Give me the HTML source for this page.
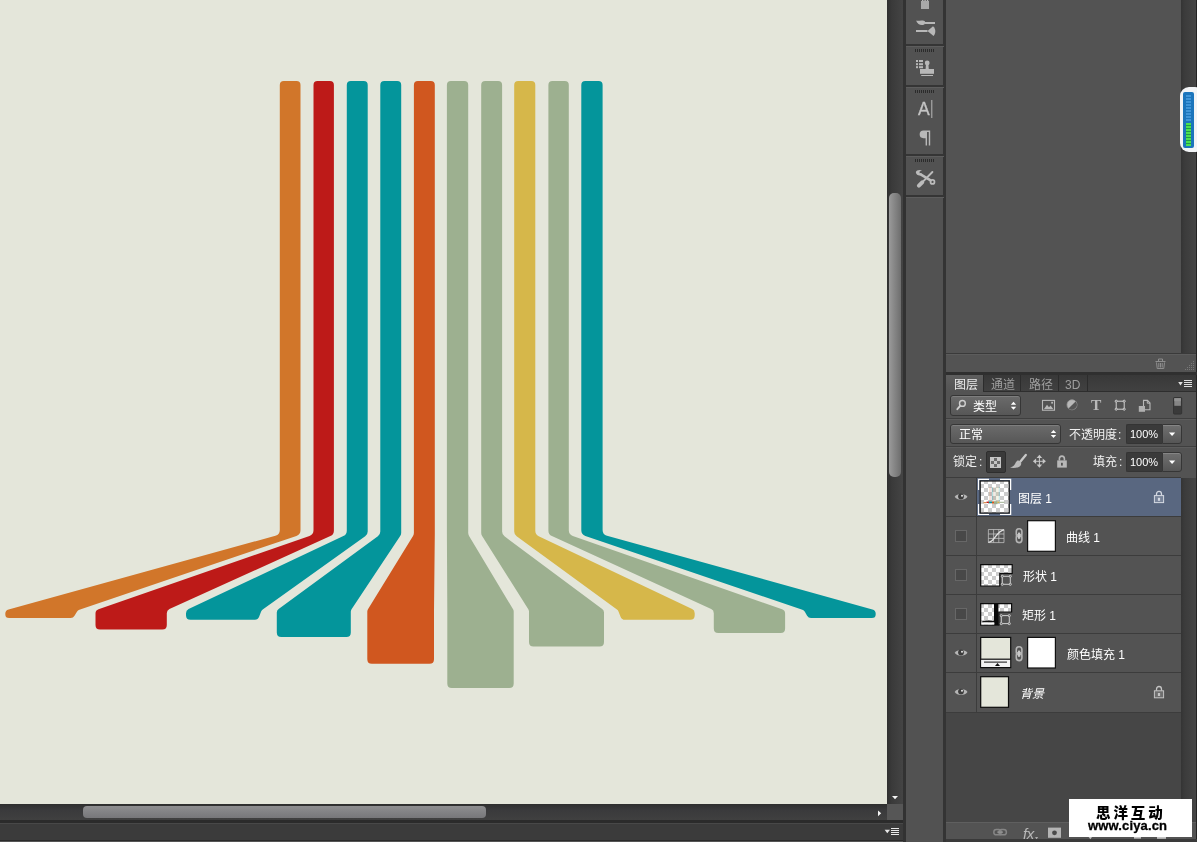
<!DOCTYPE html>
<html lang="zh-CN">
<head>
<meta charset="utf-8">
<title>Photoshop</title>
<style>
*{box-sizing:border-box;margin:0;padding:0}
html,body{width:1197px;height:842px;overflow:hidden;background:#535353}
body{position:relative;font-family:"Liberation Sans","Noto Sans CJK SC",sans-serif;font-size:12px;color:#f0f0f0}
.abs{position:absolute}
#canvas{left:0;top:0;width:887px;height:804px;background:#e4e6da}
#vscroll{left:887px;top:0;width:16px;height:804px;background:linear-gradient(90deg,#2f2f2f 0,#3a3a3a 30%,#444 100%)}
#vthumb{left:889px;top:193px;width:12px;height:284px;border-radius:5px;background:linear-gradient(90deg,#9a9a9a,#6e6e6e)}
#hscroll{left:0;top:804px;width:887px;height:16px;background:linear-gradient(180deg,#2e2e2e 0,#3a3a3c 40%,#404040 100%)}
#hthumb{left:83px;top:806px;width:403px;height:12px;border-radius:4px;background:linear-gradient(180deg,#8e8e90,#77777a)}
#corner{left:887px;top:804px;width:16px;height:16px;background:#565656}
#status{left:0;top:820px;width:903px;height:22px;background:#3b3b3b;border-top:3px solid #2b2b2b;border-bottom:1px solid #555;box-shadow:inset 0 1px 0 #484848,inset 0 -1px 0 #2a2a2a}
#iconcol{left:903px;top:0;width:43px;height:842px;background:#525252;border-left:3px solid #323232;border-right:3px solid #343434}
.sep{position:absolute;left:906px;width:38px;height:2px;background:#353535;border-bottom:1px solid #5d5d5d;height:3px}
.grip{position:absolute;left:915px;width:19px;height:3px;background:repeating-linear-gradient(90deg,#2b2b2b 0,#2b2b2b 1px,transparent 1px,transparent 2px)}
#rpanel{left:946px;top:0;width:235px;height:353px;background:#535353}
#rstrip{left:1181px;top:0;width:16px;height:842px;background:linear-gradient(90deg,#343434 0,#3b3b3b 20%,#454545 92%,#242424 94%,#222 100%)}
</style>
</head>
<body>
<div id="canvas" class="abs">
<svg width="887" height="804" viewBox="0 0 887 804" style="position:absolute;left:0;top:0">
<path fill="#d1762a" d="M279.80 85.00 Q279.80 81.00 283.80 81.00 L296.50 81.00 Q300.50 81.00 300.50 85.00 L300.50 530.20 Q300.50 534.50 296.43 535.88 L79.37 609.77 Q77.80 610.30 76.95 611.72 L74.51 615.81 Q73.20 618.00 70.65 618.00 L9.15 618.00 Q5.30 618.00 5.30 614.15 L5.30 613.73 Q5.30 610.30 8.60 609.39 L275.40 535.72 Q279.80 534.50 279.80 529.93Z"/>
<path fill="#bd1a18" d="M313.50 85.00 Q313.50 81.00 317.50 81.00 L329.90 81.00 Q333.90 81.00 333.90 85.00 L333.90 530.63 Q333.90 534.50 330.38 536.10 L169.44 609.10 Q166.80 610.30 166.80 613.20 L166.80 625.00 Q166.80 629.50 162.30 629.50 L100.00 629.50 Q95.50 629.50 95.50 625.00 L95.50 613.50 Q95.50 610.30 98.52 609.25 L309.47 535.90 Q313.50 534.50 313.50 530.23Z"/>
<path fill="#04959b" d="M346.80 85.00 Q346.80 81.00 350.80 81.00 L363.70 81.00 Q367.70 81.00 367.70 85.00 L367.70 531.41 Q367.70 534.50 365.19 536.29 L262.70 609.51 Q261.60 610.30 261.12 611.56 L259.11 616.81 Q258.00 619.70 254.90 619.70 L190.50 619.70 Q186.00 619.70 186.00 615.20 L186.00 613.15 Q186.00 610.30 188.58 609.08 L343.36 536.12 Q346.80 534.50 346.80 530.70Z"/>
<path fill="#04959b" d="M380.30 85.00 Q380.30 81.00 384.30 81.00 L397.20 81.00 Q401.20 81.00 401.20 85.00 L401.20 532.69 Q401.20 534.50 400.20 536.01 L351.55 609.17 Q350.80 610.30 350.80 611.66 L350.80 632.50 Q350.80 637.00 346.30 637.00 L281.30 637.00 Q276.80 637.00 276.80 632.50 L276.80 612.58 Q276.80 610.30 278.64 608.95 L377.85 536.30 Q380.30 534.50 380.30 531.46Z"/>
<path fill="#d0571f" d="M413.90 85.00 Q413.90 81.00 417.90 81.00 L430.80 81.00 Q434.80 81.00 434.80 85.00 L434.80 534.47 Q434.80 534.50 434.80 534.53 L434.00 610.28 Q434.00 610.30 434.00 610.32 L434.00 659.30 Q434.00 663.80 429.50 663.80 L371.80 663.80 Q367.30 663.80 367.30 659.30 L367.30 611.57 Q367.30 610.30 367.97 609.22 L413.01 535.95 Q413.90 534.50 413.90 532.80Z"/>
<path fill="#9db090" d="M446.90 85.00 Q446.90 81.00 450.90 81.00 L464.20 81.00 Q468.20 81.00 468.20 85.00 L468.20 532.84 Q468.20 534.50 469.06 535.93 L513.06 609.23 Q513.70 610.30 513.70 611.55 L513.70 683.50 Q513.70 688.00 509.20 688.00 L451.80 688.00 Q447.30 688.00 447.30 683.50 L447.30 610.31 Q447.30 610.30 447.30 610.29 L446.90 534.52 Q446.90 534.50 446.90 534.48Z"/>
<path fill="#9db090" d="M481.20 85.00 Q481.20 81.00 485.20 81.00 L498.10 81.00 Q502.10 81.00 502.10 85.00 L502.10 531.49 Q502.10 534.50 504.52 536.30 L602.19 608.95 Q604.00 610.30 604.00 612.56 L604.00 642.00 Q604.00 646.50 599.50 646.50 L533.50 646.50 Q529.00 646.50 529.00 642.00 L529.00 611.60 Q529.00 610.30 528.31 609.20 L482.12 535.97 Q481.20 534.50 481.20 532.77Z"/>
<path fill="#d6b74a" d="M514.20 85.00 Q514.20 81.00 518.20 81.00 L531.30 81.00 Q535.30 81.00 535.30 85.00 L535.30 530.71 Q535.30 534.50 538.72 536.13 L692.13 609.08 Q694.70 610.30 694.70 613.14 L694.70 615.20 Q694.70 619.70 690.20 619.70 L624.83 619.70 Q621.80 619.70 620.66 616.89 L618.48 611.49 Q618.00 610.30 616.96 609.54 L516.66 536.30 Q514.20 534.50 514.20 531.45Z"/>
<path fill="#9db090" d="M548.40 85.00 Q548.40 81.00 552.40 81.00 L564.80 81.00 Q568.80 81.00 568.80 85.00 L568.80 530.24 Q568.80 534.50 572.82 535.91 L782.09 609.24 Q785.10 610.30 785.10 613.49 L785.10 628.50 Q785.10 633.00 780.60 633.00 L718.30 633.00 Q713.80 633.00 713.80 628.50 L713.80 613.19 Q713.80 610.30 711.17 609.10 L551.90 536.10 Q548.40 534.50 548.40 530.65Z"/>
<path fill="#04959b" d="M581.30 85.00 Q581.30 81.00 585.30 81.00 L598.60 81.00 Q602.60 81.00 602.60 85.00 L602.60 529.94 Q602.60 534.50 607.00 535.72 L872.40 609.39 Q875.70 610.30 875.70 613.72 L875.70 614.15 Q875.70 618.00 871.85 618.00 L811.01 618.00 Q808.40 618.00 807.10 615.73 L804.84 611.78 Q804.00 610.30 802.39 609.75 L585.37 535.88 Q581.30 534.50 581.30 530.20Z"/>
</svg>
</div>
<div id="vscroll" class="abs"></div>
<div id="vthumb" class="abs"></div>
<div id="hscroll" class="abs"></div>
<div id="hthumb" class="abs"></div>
<div id="corner" class="abs"></div>
<div id="status" class="abs"></div>
<div id="iconcol" class="abs"></div>
<div id="rpanel" class="abs"></div>
<div id="rstrip" class="abs"></div>
<style>
.t{position:absolute;white-space:nowrap;line-height:14px;font-size:12px;will-change:transform}
.ic{position:absolute;overflow:visible}
#lbar{left:946px;top:353px;width:250px;height:19px;background:#535353;border-top:1px solid #3a3a3a;box-shadow:inset 0 1px 0 #5c5c5c}
#lgap{left:946px;top:372px;width:251px;height:3px;background:#2f2f2f}
#tabs{left:946px;top:375px;width:250px;height:17px;background:linear-gradient(#383838,#414141);border-bottom:1px solid #2e2e2e}
#tabA{left:946px;top:375px;width:37px;height:17px;background:linear-gradient(#5e5e5e,#535353)}
.tsep{position:absolute;top:375px;width:1px;height:16px;background:#2c2c2c}
#lp{left:946px;top:392px;width:250px;height:86px;background:#535353}
.hl{position:absolute;left:946px;width:250px;height:2px;background:#3f3f3f;border-bottom:1px solid #5c5c5c;height:2px}
.dd{position:absolute;border:1px solid #363636;border-radius:3px;background:linear-gradient(#6b6b6b,#575757);box-shadow:inset 0 1px 0 #7e7e7e}
.vb{position:absolute;background:#3a3a3a;border:1px solid #343434;border-right:none;border-radius:2px 0 0 2px}
.vbtn{position:absolute;border:1px solid #363636;border-radius:0 3px 3px 0;background:linear-gradient(#707070,#565656);box-shadow:inset 0 1px 0 #858585}
.row{position:absolute;left:946px;width:235px;height:39px;background:#535353;border-bottom:1px solid #3c3c3c}
.eyec{position:absolute;left:0;top:0;width:31px;height:38px;border-right:1px solid #3c3c3c;background:#535353}
.cb{position:absolute;left:9px;top:13px;width:12px;height:12px;background:#484848;border:1px solid #676767}
#lempty{left:946px;top:713px;width:235px;height:109px;background:#464646}
#lbot{left:946px;top:822px;width:250px;height:17px;background:#535353;border-top:1px solid #5f5f5f}
#lbot2{left:946px;top:839px;width:251px;height:3px;background:#3a3a3a}
#wm{left:1069px;top:799px;width:123px;height:38px;background:#fff}
</style>
<!-- icon column separators + grips -->
<div class="sep" style="top:44px"></div><div class="grip" style="top:49px"></div>
<div class="sep" style="top:85px"></div><div class="grip" style="top:90px"></div>
<div class="sep" style="top:154px"></div><div class="grip" style="top:159px"></div>
<div class="sep" style="top:195px"></div>
<!-- icons in column -->
<svg class="ic" style="left:906px;top:0" width="38" height="200" viewBox="906 0 38 200">
 <g fill="#b8b8b8">
  <rect x="921" y="1" width="8" height="8" fill="#a8a8a8"/><rect x="922" y="0" width="1.4" height="1"/><rect x="924.4" y="0" width="1.4" height="1"/><rect x="926.8" y="0" width="1.4" height="1"/>
  <!-- brush presets -->
  <path d="M916 20.5 C918 21.5 921 19.5 924.5 21 C926 22.5 925 24.5 923 25 C920 25.5 917.5 24 916 20.5Z"/>
  <rect x="925" y="22" width="10" height="2"/>
  <rect x="916" y="30" width="11.5" height="2"/>
  <path d="M927.5 31 L933 26.2 C936 29 936 33 933.5 36 Z"/>
  <!-- clone source -->
  <rect x="916" y="60" width="2" height="2"/><rect x="919" y="60" width="4" height="2"/>
  <rect x="916" y="63.2" width="2" height="2"/><rect x="919" y="63.2" width="4" height="2"/>
  <rect x="916" y="66.2" width="2" height="2"/><rect x="919" y="66.2" width="4" height="2"/>
  <circle cx="927.2" cy="63" r="2.4"/>
  <path d="M926 64 L928.4 64 L928.8 69 L925.6 69Z"/>
  <rect x="920" y="69" width="14" height="4.8"/>
  <rect x="921.2" y="75" width="11.8" height="1"/>
  <!-- paragraph -->
  <path d="M923.5 130.5 L930.2 130.5 L930.2 145.4 L928.8 145.4 L928.8 132 L927 132 L927 145.4 L925.6 145.4 L925.6 138.2 L923.5 138.2 A3.85 3.85 0 0 1 923.5 130.5Z"/>
  <rect x="931.3" y="100" width="1" height="18"/>
 </g>
 <!-- tools -->
 <g stroke="#bcbcbc" fill="none" stroke-linecap="round">
  <path d="M932.4 172 L922 182.6" stroke-width="1.9"/>
  <path d="M922.2 182.4 L918.9 185.6" stroke-width="4"/>
  <path d="M920.6 174.4 L930.6 180.4" stroke-width="2.5"/>
  <circle cx="932.5" cy="181.9" r="2" stroke-width="1.7"/>
 </g>
 <path fill="#bcbcbc" d="M915.8 172.2 C916.4 170 919.6 169.2 922 170.6 L919.6 171.6 L919.6 173.2 L922.2 173.8 C921 176.4 916.6 176.2 915.8 172.2Z"/>
</svg>
<div class="t" style="left:917.7px;top:98px;font-size:17.5px;line-height:22px;color:#c4c4c4;-webkit-text-stroke:0.3px #c4c4c4">A</div>
<!-- blue meter widget -->
<div class="abs" style="left:1180px;top:87px;width:24px;height:65px;border-radius:9px;background:#f2f4f6"></div>
<div class="abs" style="left:1183px;top:92px;width:11px;height:56px;border-radius:2px;background:#1b75bc"></div>
<div class="abs" style="left:1186px;top:95px;width:5px;height:27px;background:repeating-linear-gradient(#3f95d8 0,#3f95d8 2px,#1b75bc 2px,#1b75bc 3px)"></div>
<div class="abs" style="left:1186px;top:123px;width:5px;height:23px;background:repeating-linear-gradient(#4be04f 0,#4be04f 2px,#1f9a48 2px,#1f9a48 3px)"></div>

<!-- layers panel -->
<div id="lbar" class="abs"></div><div id="lgap" class="abs"></div>
<div id="tabs" class="abs"></div><div id="tabA" class="abs"></div>
<div class="tsep" style="left:983px"></div><div class="tsep" style="left:1020px"></div><div class="tsep" style="left:1058px"></div><div class="tsep" style="left:1087px"></div>
<div class="t" style="left:954px;top:377.8px;color:#ececec">图层</div>
<div class="t" style="left:991px;top:377.8px;color:#9e9e9e">通道</div>
<div class="t" style="left:1029px;top:377.8px;color:#9e9e9e">路径</div>
<div class="t" style="left:1065px;top:377.8px;color:#9e9e9e">3D</div>
<div id="lp" class="abs"></div>
<div class="hl" style="top:418px"></div><div class="hl" style="top:446px"></div>
<!-- filter row -->
<div class="dd" style="left:950px;top:395px;width:71px;height:21px"></div>
<div class="t" style="left:972.5px;top:399.7px;color:#fff">类型</div>
<!-- blend row -->
<div class="dd" style="left:950px;top:424px;width:111px;height:20px"></div>
<div class="t" style="left:958.5px;top:427.5px;color:#fff">正常</div>
<div class="t" style="left:1068.6px;top:427.5px;color:#f0f0f0">不透明度<span style="margin-left:1px">:</span></div>
<div class="vb" style="left:1126px;top:424px;width:36px;height:20px"></div>
<div class="vbtn" style="left:1162px;top:424px;width:20px;height:20px"></div>
<div class="t" style="left:1129.8px;top:426.8px;color:#fff;font-size:11px">100%</div>
<!-- lock row -->
<div class="t" style="left:952.6px;top:454.6px;color:#f0f0f0">锁定<span style="margin-left:2px">:</span></div>
<div class="abs" style="left:986px;top:451px;width:20px;height:22px;background:#3a3a3a;border:1px solid #2e2e2e;border-radius:2px"></div>
<div class="t" style="left:1092.6px;top:454.6px;color:#f0f0f0">填充<span style="margin-left:2px">:</span></div>
<div class="vb" style="left:1126px;top:452px;width:36px;height:20px"></div>
<div class="vbtn" style="left:1162px;top:452px;width:20px;height:20px"></div>
<div class="t" style="left:1129.8px;top:454.8px;color:#fff;font-size:11px">100%</div>
<div class="abs" style="left:946px;top:477px;width:235px;height:1px;background:#3c3c3c"></div>
<!-- layer rows -->
<div class="row" style="top:478px;background:#596780"><div class="eyec"></div></div>
<div class="row" style="top:517px"><div class="eyec"><div class="cb"></div></div></div>
<div class="row" style="top:556px"><div class="eyec"><div class="cb"></div></div></div>
<div class="row" style="top:595px"><div class="eyec"><div class="cb"></div></div></div>
<div class="row" style="top:634px"><div class="eyec"></div></div>
<div class="row" style="top:673px;height:40px"><div class="eyec" style="height:39px"></div></div>
<div class="t" style="left:1018.4px;top:491.6px;color:#fff">图层 1</div>
<div class="t" style="left:1065.6px;top:530.7px;color:#fff">曲线 1</div>
<div class="t" style="left:1022.9px;top:569.8px;color:#fff">形状 1</div>
<div class="t" style="left:1021.9px;top:608.9px;color:#fff">矩形 1</div>
<div class="t" style="left:1066.5px;top:647.7px;color:#fff">颜色填充 1</div>
<div class="t" style="left:1019.5px;top:686.6px;color:#fff;font-style:italic">背景</div>
<div id="lempty" class="abs"></div>
<div id="lbot" class="abs"></div><div id="lbot2" class="abs"></div>
<svg width="0" height="0" style="position:absolute">
 <defs>
  <pattern id="chk" width="8" height="8" patternUnits="userSpaceOnUse"><rect width="8" height="8" fill="#fff"/><rect width="4" height="4" fill="#ccc"/><rect x="4" y="4" width="4" height="4" fill="#ccc"/></pattern>
  <g id="eye"><path d="M0 4.4 C2.2 0.6 10.4 0.6 12.8 4.4 C10.4 8.4 2.2 8.4 0 4.4Z" fill="#b6b6b6"/><circle cx="6.3" cy="4.1" r="2.9" fill="#3c3c3c"/><circle cx="7.3" cy="3.3" r="1" fill="#e6e6e6"/></g>
  <g id="lock"><path d="M2.6 5 V3.4 A2.5 2.7 0 0 1 7.6 3.4 V5" fill="none" stroke-width="1.3"/><rect x="0.5" y="5" width="9.2" height="7" fill-opacity=".25" stroke-width="1"/><rect x="4" y="7.2" width="2.2" height="3" stroke="none"/></g>
  <g id="chain" fill="none" stroke="#b4b4b4" stroke-width="1.6"><rect x="1" y="0.8" width="5.6" height="8" rx="2.8"/><rect x="1" y="6.6" width="5.6" height="8" rx="2.8"/><path d="M3.8 4.6 V10.8" stroke-width="2.2" stroke="#c8c8c8"/></g>
  <g id="xf" fill="none" stroke="#d0d0d0" stroke-width="1"><rect x="1.5" y="1.5" width="8" height="8"/><g fill="#535353"><rect x="0.5" y="0.5" width="2" height="2" rx=".8"/><rect x="8.5" y="0.5" width="2" height="2" rx=".8"/><rect x="0.5" y="8.5" width="2" height="2" rx=".8"/><rect x="8.5" y="8.5" width="2" height="2" rx=".8"/></g></g>
  <g id="ud" fill="#fff"><path d="M0 3 L2.7 0 L5.4 3Z"/><path d="M0 5 L2.7 8 L5.4 5Z"/></g>
 </defs>
</svg>
<svg class="ic" style="left:0;top:0" width="1197" height="842" viewBox="0 0 1197 842">
 <!-- scroll arrows -->
 <path d="M892 796 L898 796 L895 799.2Z" fill="#f4f4f4"/>
 <path d="M878 810.4 L881.2 813.3 L878 816.2Z" fill="#f4f4f4"/>
 <!-- status menu -->
 <path d="M884.6 829.8 L890 829.8 L887.3 833.2Z" fill="#e8e8e8"/>
 <g fill="#e8e8e8"><rect x="891" y="828" width="8" height="1"/><rect x="891" y="830" width="8" height="1"/><rect x="891" y="832" width="8" height="1"/><rect x="891" y="834" width="8" height="1"/></g>
 <!-- trash -->
 <g fill="none" stroke="#8e8e8e" stroke-width="1"><path d="M1155.5 361.5 H1165.5"/><path d="M1158.5 361 V359 H1162.5 V361"/><path d="M1156.5 362.5 L1157.2 368.5 H1163.8 L1164.5 362.5"/><path d="M1158.8 363 V367.5 M1160.5 363 V367.5 M1162.2 363 V367.5"/></g>
 <!-- resize grip -->
 <g fill="#777"><rect x="1193" y="361" width="1" height="1"/><rect x="1191" y="363" width="1" height="1"/><rect x="1193" y="363" width="1" height="1"/><rect x="1189" y="365" width="1" height="1"/><rect x="1191" y="365" width="1" height="1"/><rect x="1193" y="365" width="1" height="1"/><rect x="1187" y="367" width="1" height="1"/><rect x="1189" y="367" width="1" height="1"/><rect x="1191" y="367" width="1" height="1"/><rect x="1193" y="367" width="1" height="1"/><rect x="1185" y="369" width="1" height="1"/><rect x="1187" y="369" width="1" height="1"/><rect x="1189" y="369" width="1" height="1"/><rect x="1191" y="369" width="1" height="1"/><rect x="1193" y="369" width="1" height="1"/></g>
 <!-- panel menu -->
 <path d="M1178.2 382 L1182.8 382 L1180.5 385.6Z" fill="#e0e0e0"/>
 <g fill="#e0e0e0"><rect x="1184" y="380" width="8" height="1"/><rect x="1184" y="382" width="8" height="1"/><rect x="1184" y="384" width="8" height="1"/><rect x="1184" y="386" width="8" height="1"/></g>
 <!-- magnifier -->
 <g fill="none" stroke="#d0d0d0"><circle cx="962.4" cy="403.4" r="2.9" stroke-width="1.4"/><path d="M960.2 405.8 L957.3 409.2" stroke-width="1.8" stroke-linecap="round"/></g>
 <use href="#ud" x="1010.8" y="401.8"/>
 <use href="#ud" x="1050.8" y="430"/>
 <!-- filter icons -->
 <g fill="none" stroke="#b8b8b8" stroke-width="1.1"><rect x="1042.5" y="400.4" width="12" height="9.8"/></g>
 <path d="M1044 409 L1047 404.8 L1049 407.2 L1050.6 405.6 L1053.2 409Z" fill="#b8b8b8"/><rect x="1051.2" y="401.8" width="1.8" height="1.8" fill="#b8b8b8"/>
 <circle cx="1072" cy="404.8" r="5" fill="#b8b8b8" stroke="#9a9a9a" stroke-width=".8"/><path d="M1075.6 401.4 A5 5 0 0 1 1068.5 408.4Z" fill="#555"/>
 <use href="#xf" x="1114.7" y="399.7"/>
 <g><path d="M1143.5 400.4 H1147.5 L1150 403 V409.8 H1143.5Z" fill="none" stroke="#b8b8b8" stroke-width="1.1"/><path d="M1147.3 400.4 V403.2 H1150" fill="none" stroke="#b8b8b8" stroke-width="1"/><rect x="1138.8" y="406" width="6.2" height="5.8" fill="#b0b0b0"/></g>
 <!-- toggle -->
 <rect x="1173.5" y="397.5" width="8.2" height="16.6" rx="1" fill="#3a3a3a" stroke="#303030" stroke-width=".8"/><rect x="1174.3" y="398.2" width="6.6" height="7.6" fill="#858585"/><rect x="1174.3" y="398.2" width="6.6" height="3" fill="#929292"/>
 <!-- value arrows -->
 <path d="M1169 432.6 L1175.2 432.6 L1172.1 436Z" fill="#fff"/>
 <path d="M1169 460.6 L1175.2 460.6 L1172.1 464Z" fill="#fff"/>
 <!-- lock-row icons -->
 <g><rect x="990.5" y="457.5" width="10" height="10" fill="#6a6a6a" stroke="#c4c4c4" stroke-width="1"/><g fill="#c4c4c4"><rect x="991" y="458" width="3" height="3"/><rect x="997" y="458" width="3" height="3"/><rect x="994" y="461" width="3" height="3"/><rect x="991" y="464" width="3" height="3"/><rect x="997" y="464" width="3" height="3"/></g></g>
 <g><path d="M1025.8 455 L1019.2 463" stroke="#c8c8c8" stroke-width="2.3" stroke-linecap="round" fill="none"/><path d="M1018.4 460.6 C1020.6 461 1022 463 1020.8 465.2 C1019 468 1013.6 468.2 1010 467.6 C1013.4 466.6 1014.6 465 1015.4 463.2 C1016 461.6 1017 460.6 1018.4 460.6Z" fill="#bcbcbc"/></g>
 <g fill="#c8c8c8"><path d="M1039.4 454.8 L1042.2 458 H1036.6Z"/><path d="M1039.4 467.8 L1042.2 464.6 H1036.6Z"/><path d="M1032.9 461.3 L1036.1 458.5 V464.1Z"/><path d="M1045.9 461.3 L1042.7 458.5 V464.1Z"/><rect x="1038.9" y="457" width="1" height="8.6"/><rect x="1035" y="460.8" width="8.8" height="1"/></g>
 <g transform="translate(1056.8,455.4)" fill="#b8b8b8" stroke="#b8b8b8"><path d="M2.6 5 V3.4 A2.5 2.7 0 0 1 7.6 3.4 V5" fill="none" stroke-width="1.6"/><rect x="0.4" y="5" width="9.6" height="7.2" stroke="none"/><rect x="4.2" y="7.4" width="1.8" height="2.8" fill="#535353" stroke="none"/></g>
 <!-- eyes -->
 <use href="#eye" x="954.7" y="492.4"/><use href="#eye" x="954.7" y="648.4"/><use href="#eye" x="954.7" y="687.5"/>
 <!-- row locks -->
 <use href="#lock" x="1153.9" y="490.6" fill="#d4d9e2" stroke="#d4d9e2"/>
 <use href="#lock" x="1153.9" y="685.8" fill="#c4c4c4" stroke="#c4c4c4"/>
 <!-- row1 thumb -->
 <g fill="none" stroke="#fff" stroke-width="1.3"><path d="M989 479.4 H978.6 V490"/><path d="M1000 479.4 H1010.6 V490"/><path d="M978.6 504 V514.4 H989"/><path d="M1010.6 504 V514.4 H1000"/></g>
 <rect x="980.2" y="481" width="29" height="32" fill="url(#chk)" stroke="#141414" stroke-width="1.2"/>
 <g><rect x="983.5" y="502.2" width="3" height="1" fill="#d1762a"/><rect x="986.5" y="501.6" width="2.4" height="1.4" fill="#bd1a18"/><rect x="989" y="501.6" width="3" height="1.4" fill="#04959b"/><rect x="992" y="501.4" width="2" height="2.2" fill="#d0571f"/><rect x="994" y="501.2" width="3.4" height="3" fill="#9db090"/><rect x="997.4" y="501.6" width="2" height="1.4" fill="#d6b74a"/><rect x="999.4" y="501.8" width="5" height="1" fill="#9db090"/><g fill-opacity=".3"><rect x="989.4" y="487" width=".7" height="14" fill="#d1762a"/><rect x="990.6" y="487" width=".7" height="14" fill="#bd1a18"/><rect x="991.8" y="487" width="1.4" height="14" fill="#04959b"/><rect x="993.6" y="487" width=".7" height="14" fill="#d0571f"/><rect x="994.8" y="487" width="1.6" height="15" fill="#9db090"/><rect x="996.8" y="487" width=".7" height="14" fill="#d6b74a"/><rect x="998" y="487" width=".7" height="14" fill="#9db090"/><rect x="999.2" y="487" width=".7" height="14" fill="#04959b"/></g></g>
 <!-- row2 curves -->
 <g fill="none" stroke="#c4c4c4" stroke-width="1"><path d="M988.4 529.5 H1004 M988.4 534 H1004 M988.4 538.4 H1004 M988.4 542.6 H1004" stroke-opacity=".75"/><path d="M988.4 529.5 V542.6 M993.6 529.5 V542.6 M998.8 529.5 V542.6 M1004 529.5 V542.6" stroke-opacity=".75"/><path d="M988.4 542.4 C995 542 996 531 1004 529.8" stroke="#e0e0e0" stroke-width="1.3"/></g>
 <use href="#chain" x="1015.3" y="528"/>
 <rect x="1027.6" y="520.7" width="27.8" height="30.6" fill="#fff" stroke="#111" stroke-width="1.2"/>
 <!-- row3 shape thumb -->
 <path d="M980.7 564.6 H1012.2 V573.4 H999.8 V586 H980.7Z" fill="url(#chk)" stroke="#0c0c0c" stroke-width="1.2"/>
 <use href="#xf" x="1000.8" y="574.8"/>
 <!-- row4 rect thumb -->
 <path d="M980.7 603.6 H1011.6 V612 H998.8 V625.2 H980.7Z" fill="url(#chk)" stroke="#0c0c0c" stroke-width="1.2"/>
 <rect x="994" y="604" width="4.4" height="21" fill="#0a0a0a"/><path d="M982 621.5 C986 619.5 990 621.5 994 620.5 L994 622.5 L982 622.5Z" fill="#111"/><rect x="981.4" y="622.5" width="13" height="2" fill="#fafafa"/>
 <use href="#xf" x="999.8" y="614.1"/>
 <!-- row5 color fill -->
 <rect x="980.7" y="637.4" width="30" height="30.2" fill="#e4e6da" stroke="#0c0c0c" stroke-width="1.2"/>
 <rect x="981.3" y="659" width="28.8" height="8" fill="#f2f2f2"/><rect x="980.7" y="658.6" width="30" height="1.2" fill="#0c0c0c"/><rect x="984" y="661.6" width="23" height="1" fill="#111"/><path d="M995 666 L997.5 663 L1000 666Z" fill="#111"/>
 <use href="#chain" x="1015.3" y="646"/>
 <rect x="1027.6" y="637.4" width="27.8" height="30.6" fill="#fff" stroke="#111" stroke-width="1.2"/>
 <!-- row6 bg thumb -->
 <rect x="980.7" y="676.7" width="27.8" height="30.6" fill="#e4e6da" stroke="#0c0c0c" stroke-width="1.2"/>
 <!-- bottom bar icons -->
 <g fill="none" stroke="#858585" stroke-width="1.5"><rect x="993.8" y="829.6" width="7.4" height="5.2" rx="2.6"/><rect x="999" y="829.6" width="7.4" height="5.2" rx="2.6"/><path d="M997.4 832.2 H1002.8" stroke-width="1.8" stroke="#909090"/></g>
 <path d="M1035 837.2 L1038.2 837.2 L1036.6 839Z" fill="#c8c8c8"/>
 <rect x="1048" y="827.6" width="13" height="10.2" fill="#b4b4b4"/><circle cx="1054.5" cy="832.8" r="2.4" fill="#4a4a4a"/>
 <g fill="#c4c4c4"><path d="M1088.6 837 L1092 837 L1090.3 839.2Z"/><rect x="1134" y="837" width="7" height="1.6"/><rect x="1157" y="837" width="9" height="1.8"/></g>
</svg>
<div class="t" style="left:1090.6px;top:397px;font-family:'Liberation Serif',serif;font-weight:bold;font-size:15.5px;line-height:16px;color:#b8b8b8">T</div>
<div class="t" style="left:1022.5px;top:824.5px;font-style:italic;font-size:15px;line-height:18px;color:#b8b8b8;letter-spacing:-0.5px">fx</div>
<!-- watermark -->
<div id="wm" class="abs"></div>
<div class="t" style="left:1095.5px;top:803.8px;font-family:'Liberation Sans','Noto Sans CJK SC',sans-serif;font-weight:900;font-size:14.5px;line-height:18px;letter-spacing:2.9px;color:#000">思洋互动</div>
<div class="t" style="left:1088px;top:818px;font-weight:bold;font-size:13px;line-height:16px;letter-spacing:0.15px;color:#000;-webkit-text-stroke:0.3px #000;text-shadow:0 0 2px #fff,0 0 2px #fff,0 0 1px #fff">www.ciya.cn</div>

</body>
</html>
